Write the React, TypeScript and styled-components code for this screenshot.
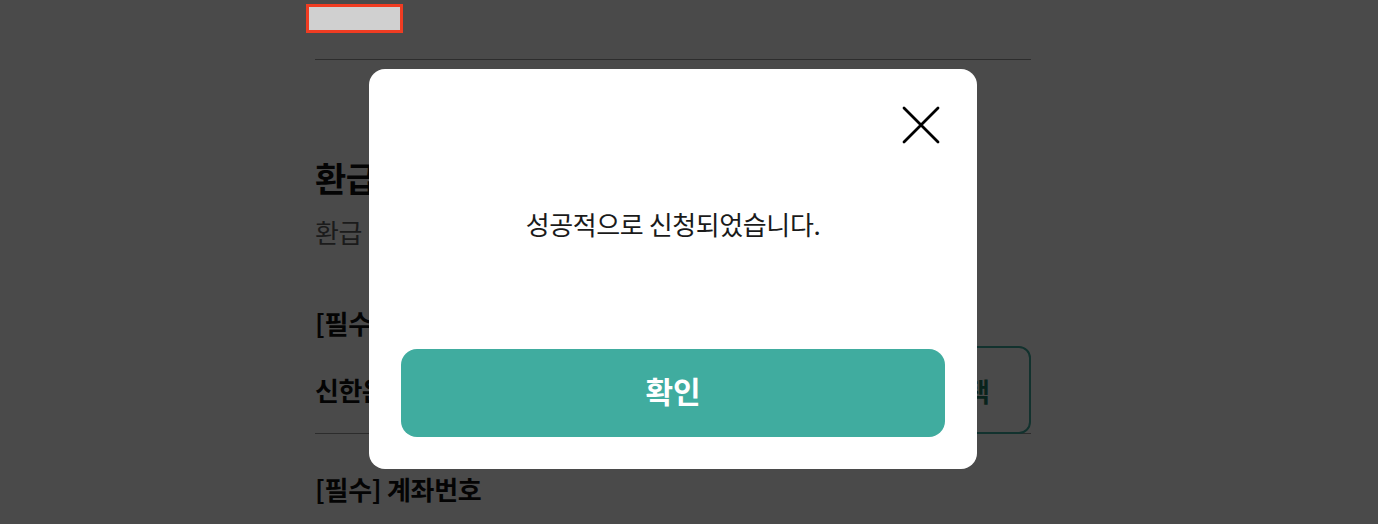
import React from "react"
import styled, { createGlobalStyle } from "styled-components"

const GlobalStyle = createGlobalStyle`
  html, body {
    margin: 0;
    padding: 0;
    background: #ffffff;
    font-family: "Noto Sans CJK KR", "Noto Sans", sans-serif;
    color: #111;
  }
  * { box-sizing: border-box; }
`

const S = {
  Page: styled.div`
    width: 716px;
    margin-left: 315px;
  `,
  Header: styled.header`
    height: 60px;
    border-bottom: 1px solid #9a9a9a;
    display: flex;
    align-items: flex-start;
    padding-top: 4px;
  `,
  Logo: styled.div`
    position: relative;
    z-index: 20;
    width: 97px;
    height: 29px;
    margin-left: -9px;
    background: #d0d0d0;
    border: 3px solid #f03c22;
  `,
  Title: styled.h1`
    margin: 96px 0 0;
    font-size: 34px;
    font-weight: 700;
    line-height: 44px;
    letter-spacing: -0.5px;
  `,
  Sub: styled.p`
    margin: 15px 0 0;
    font-size: 26px;
    line-height: 34px;
    color: #5e5e5e;
    letter-spacing: -0.5px;
  `,
  Label: styled.h2`
    margin: 0;
    font-size: 26px;
    font-weight: 700;
    line-height: 34px;
    letter-spacing: -0.3px;
  `,
  Section: styled.section<{ $top: number }>`
    margin-top: ${({ $top }) => $top}px;
  `,
  Row: styled.div`
    display: flex;
    align-items: center;
    justify-content: space-between;
    margin-top: 6px;
    border-bottom: 1px solid #999;
  `,
  Bank: styled.span`
    font-size: 26px;
    font-weight: 700;
    letter-spacing: -0.5px;
  `,
  Pick: styled.button`
    width: 130px;
    height: 88px;
    margin-bottom: -1px;
    border: 2px solid #3fac9f;
    border-radius: 12px;
    background: #fff;
    color: #1f7a62;
    font-family: inherit;
    font-size: 26px;
    font-weight: 700;
  `,
  Overlay: styled.div`
    position: fixed;
    inset: 0;
    z-index: 10;
    background: rgba(0, 0, 0, 0.71);
    display: flex;
    justify-content: center;
    align-items: center;
    padding: 14px 32px 0 0;
  `,
  Modal: styled.div`
    width: 608px;
    height: 400px;
    background: #fff;
    border-radius: 16px;
    padding: 32px;
    display: flex;
    flex-direction: column;
  `,
  Top: styled.div`
    display: flex;
    justify-content: flex-end;
  `,
  Close: styled.button`
    width: 48px;
    height: 48px;
    padding: 0;
    border: 0;
    background: none;
    display: flex;
    align-items: center;
    justify-content: center;
  `,
  Message: styled.p`
    margin: 58px 0 0;
    text-align: center;
    font-size: 26px;
    line-height: 34px;
    color: #1a1a1a;
    letter-spacing: -0.4px;
  `,
  Confirm: styled.button`
    margin-top: auto;
    height: 88px;
    border: 0;
    border-radius: 16px;
    background: #40ac9f;
    color: #fff;
    font-family: inherit;
    font-size: 30px;
    font-weight: 700;
    line-height: 1;
    padding-bottom: 8px;
  `,
}

export default function App() {
  return (
    <>
      <GlobalStyle />
      <S.Page>
        <S.Header>
          <S.Logo />
        </S.Header>
        <S.Title>환급 계좌 등록</S.Title>
        <S.Sub>환급 받으실 계좌를 입력해 주세요.</S.Sub>
        <S.Section $top={57}>
          <S.Label>[필수] 은행명</S.Label>
          <S.Row>
            <S.Bank>신한은행</S.Bank>
            <S.Pick>선택</S.Pick>
          </S.Row>
        </S.Section>
        <S.Section $top={38}>
          <S.Label>[필수] 계좌번호</S.Label>
        </S.Section>
      </S.Page>
      <S.Overlay>
        <S.Modal>
          <S.Top>
            <S.Close aria-label="닫기">
              <svg width="38" height="38" viewBox="0 0 38 38">
                <path d="M2 2 L36 36 M36 2 L2 36" stroke="#000" strokeWidth="2.8" strokeLinecap="round" />
              </svg>
            </S.Close>
          </S.Top>
          <S.Message>성공적으로 신청되었습니다.</S.Message>
          <S.Confirm>확인</S.Confirm>
        </S.Modal>
      </S.Overlay>
    </>
  )
}
